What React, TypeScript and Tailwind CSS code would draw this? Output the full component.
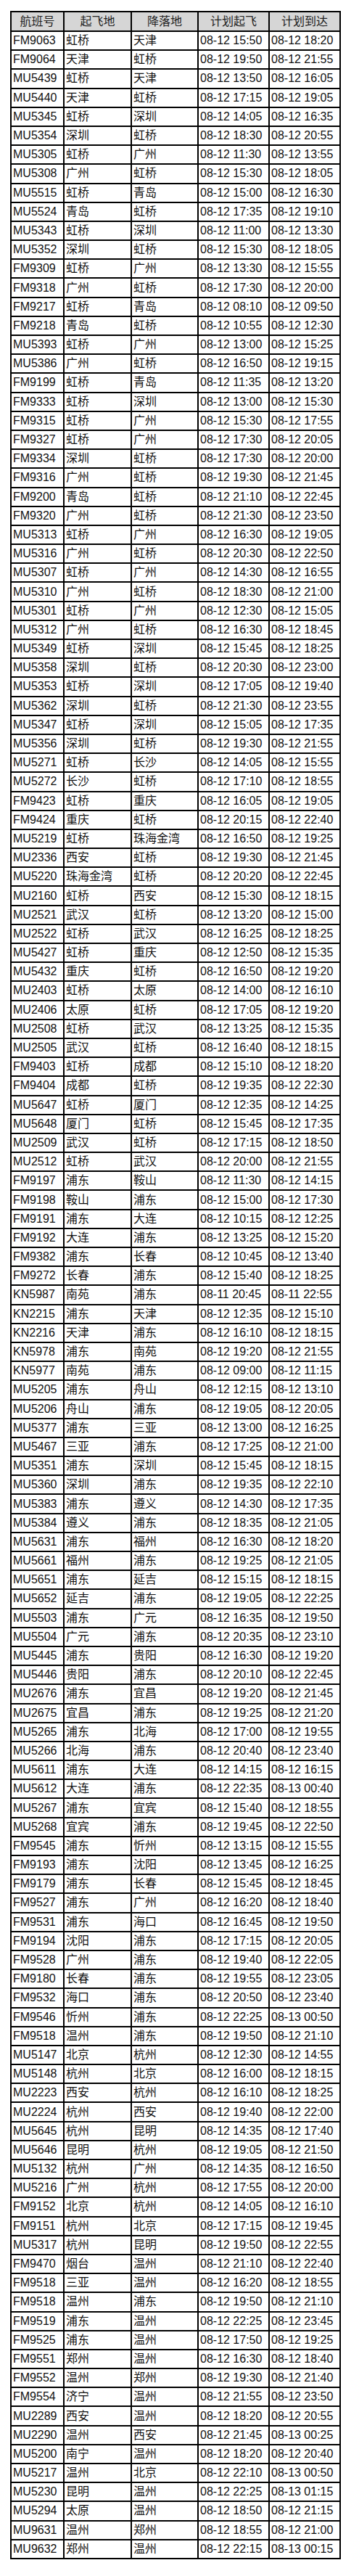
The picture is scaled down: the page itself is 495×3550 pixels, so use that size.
const raw = `FM9063|虹桥|天津|08-12 15:50|08-12 18:20
FM9064|天津|虹桥|08-12 19:50|08-12 21:55
MU5439|虹桥|天津|08-12 13:50|08-12 16:05
MU5440|天津|虹桥|08-12 17:15|08-12 19:05
MU5345|虹桥|深圳|08-12 14:05|08-12 16:35
MU5354|深圳|虹桥|08-12 18:30|08-12 20:55
MU5305|虹桥|广州|08-12 11:30|08-12 13:55
MU5308|广州|虹桥|08-12 15:30|08-12 18:05
MU5515|虹桥|青岛|08-12 15:00|08-12 16:30
MU5524|青岛|虹桥|08-12 17:35|08-12 19:10
MU5343|虹桥|深圳|08-12 11:00|08-12 13:30
MU5352|深圳|虹桥|08-12 15:30|08-12 18:05
FM9309|虹桥|广州|08-12 13:30|08-12 15:55
FM9318|广州|虹桥|08-12 17:30|08-12 20:00
FM9217|虹桥|青岛|08-12 08:10|08-12 09:50
FM9218|青岛|虹桥|08-12 10:55|08-12 12:30
MU5393|虹桥|广州|08-12 13:00|08-12 15:25
MU5386|广州|虹桥|08-12 16:50|08-12 19:15
FM9199|虹桥|青岛|08-12 11:35|08-12 13:20
FM9333|虹桥|深圳|08-12 13:00|08-12 15:30
FM9315|虹桥|广州|08-12 15:30|08-12 17:55
FM9327|虹桥|广州|08-12 17:30|08-12 20:05
FM9334|深圳|虹桥|08-12 17:30|08-12 20:00
FM9316|广州|虹桥|08-12 19:30|08-12 21:45
FM9200|青岛|虹桥|08-12 21:10|08-12 22:45
FM9320|广州|虹桥|08-12 21:30|08-12 23:50
MU5313|虹桥|广州|08-12 16:30|08-12 19:05
MU5316|广州|虹桥|08-12 20:30|08-12 22:50
MU5307|虹桥|广州|08-12 14:30|08-12 16:55
MU5310|广州|虹桥|08-12 18:30|08-12 21:00
MU5301|虹桥|广州|08-12 12:30|08-12 15:05
MU5312|广州|虹桥|08-12 16:30|08-12 18:45
MU5349|虹桥|深圳|08-12 15:45|08-12 18:25
MU5358|深圳|虹桥|08-12 20:30|08-12 23:00
MU5353|虹桥|深圳|08-12 17:05|08-12 19:40
MU5362|深圳|虹桥|08-12 21:30|08-12 23:55
MU5347|虹桥|深圳|08-12 15:05|08-12 17:35
MU5356|深圳|虹桥|08-12 19:30|08-12 21:55
MU5271|虹桥|长沙|08-12 14:05|08-12 15:55
MU5272|长沙|虹桥|08-12 17:10|08-12 18:55
FM9423|虹桥|重庆|08-12 16:05|08-12 19:05
FM9424|重庆|虹桥|08-12 20:15|08-12 22:40
MU5219|虹桥|珠海金湾|08-12 16:50|08-12 19:25
MU2336|西安|虹桥|08-12 19:30|08-12 21:45
MU5220|珠海金湾|虹桥|08-12 20:20|08-12 22:45
MU2160|虹桥|西安|08-12 15:30|08-12 18:15
MU2521|武汉|虹桥|08-12 13:20|08-12 15:00
MU2522|虹桥|武汉|08-12 16:25|08-12 18:25
MU5427|虹桥|重庆|08-12 12:50|08-12 15:35
MU5432|重庆|虹桥|08-12 16:50|08-12 19:20
MU2403|虹桥|太原|08-12 14:00|08-12 16:10
MU2406|太原|虹桥|08-12 17:05|08-12 19:20
MU2508|虹桥|武汉|08-12 13:25|08-12 15:35
MU2505|武汉|虹桥|08-12 16:40|08-12 18:15
FM9403|虹桥|成都|08-12 15:10|08-12 18:20
FM9404|成都|虹桥|08-12 19:35|08-12 22:30
MU5647|虹桥|厦门|08-12 12:35|08-12 14:25
MU5648|厦门|虹桥|08-12 15:45|08-12 17:35
MU2509|武汉|虹桥|08-12 17:15|08-12 18:50
MU2512|虹桥|武汉|08-12 20:00|08-12 21:55
FM9197|浦东|鞍山|08-12 11:30|08-12 14:15
FM9198|鞍山|浦东|08-12 15:00|08-12 17:30
FM9191|浦东|大连|08-12 10:15|08-12 12:25
FM9192|大连|浦东|08-12 13:25|08-12 15:20
FM9382|浦东|长春|08-12 10:45|08-12 13:40
FM9272|长春|浦东|08-12 15:40|08-12 18:25
KN5987|南苑|浦东|08-11 20:45|08-11 22:55
KN2215|浦东|天津|08-12 12:35|08-12 15:10
KN2216|天津|浦东|08-12 16:10|08-12 18:15
KN5978|浦东|南苑|08-12 19:20|08-12 21:55
KN5977|南苑|浦东|08-12 09:00|08-12 11:15
MU5205|浦东|舟山|08-12 12:15|08-12 13:10
MU5206|舟山|浦东|08-12 19:05|08-12 20:05
MU5377|浦东|三亚|08-12 13:00|08-12 16:25
MU5467|三亚|浦东|08-12 17:25|08-12 21:00
MU5351|浦东|深圳|08-12 15:45|08-12 18:15
MU5360|深圳|浦东|08-12 19:35|08-12 22:10
MU5383|浦东|遵义|08-12 14:30|08-12 17:35
MU5384|遵义|浦东|08-12 18:35|08-12 21:05
MU5631|浦东|福州|08-12 16:30|08-12 18:20
MU5661|福州|浦东|08-12 19:25|08-12 21:05
MU5651|浦东|延吉|08-12 15:15|08-12 18:15
MU5652|延吉|浦东|08-12 19:05|08-12 22:25
MU5503|浦东|广元|08-12 16:35|08-12 19:50
MU5504|广元|浦东|08-12 20:35|08-12 23:10
MU5445|浦东|贵阳|08-12 16:30|08-12 19:20
MU5446|贵阳|浦东|08-12 20:10|08-12 22:45
MU2676|浦东|宜昌|08-12 19:20|08-12 21:45
MU2675|宜昌|浦东|08-12 19:25|08-12 21:20
MU5265|浦东|北海|08-12 17:00|08-12 19:55
MU5266|北海|浦东|08-12 20:40|08-12 23:40
MU5611|浦东|大连|08-12 14:15|08-12 16:15
MU5612|大连|浦东|08-12 22:35|08-13 00:40
MU5267|浦东|宜宾|08-12 15:40|08-12 18:55
MU5268|宜宾|浦东|08-12 19:45|08-12 22:50
FM9545|浦东|忻州|08-12 13:15|08-12 15:55
FM9193|浦东|沈阳|08-12 13:45|08-12 16:25
FM9179|浦东|长春|08-12 15:45|08-12 18:45
FM9527|浦东|广州|08-12 16:20|08-12 18:40
FM9531|浦东|海口|08-12 16:45|08-12 19:50
FM9194|沈阳|浦东|08-12 17:15|08-12 20:05
FM9528|广州|浦东|08-12 19:40|08-12 22:05
FM9180|长春|浦东|08-12 19:55|08-12 23:05
FM9532|海口|浦东|08-12 20:50|08-12 23:40
FM9546|忻州|浦东|08-12 22:25|08-13 00:50
FM9518|温州|浦东|08-12 19:50|08-12 21:10
MU5147|北京|杭州|08-12 12:30|08-12 14:55
MU5148|杭州|北京|08-12 16:00|08-12 18:15
MU2223|西安|杭州|08-12 16:10|08-12 18:25
MU2224|杭州|西安|08-12 19:40|08-12 22:00
MU5645|杭州|昆明|08-12 14:35|08-12 17:40
MU5646|昆明|杭州|08-12 19:05|08-12 21:50
MU5132|杭州|广州|08-12 14:35|08-12 16:50
MU5216|广州|杭州|08-12 17:55|08-12 20:00
FM9152|北京|杭州|08-12 14:05|08-12 16:10
FM9151|杭州|北京|08-12 17:15|08-12 19:45
MU5317|杭州|昆明|08-12 19:50|08-12 22:55
FM9470|烟台|温州|08-12 21:10|08-12 22:40
FM9518|三亚|温州|08-12 16:20|08-12 18:55
FM9518|温州|浦东|08-12 19:50|08-12 21:10
FM9519|浦东|温州|08-12 22:25|08-12 23:45
FM9525|浦东|温州|08-12 17:50|08-12 19:25
FM9551|郑州|温州|08-12 16:30|08-12 18:40
FM9552|温州|郑州|08-12 19:30|08-12 21:40
FM9554|济宁|温州|08-12 21:55|08-12 23:50
MU2289|西安|温州|08-12 18:20|08-12 20:55
MU2290|温州|西安|08-12 21:45|08-13 00:25
MU5200|南宁|温州|08-12 18:20|08-12 20:40
MU5217|温州|北京|08-12 22:10|08-13 00:50
MU5230|昆明|温州|08-12 22:25|08-13 01:15
MU5294|太原|温州|08-12 18:50|08-12 21:15
MU9631|温州|郑州|08-12 18:55|08-12 21:00
MU9632|郑州|温州|08-12 22:15|08-13 00:15`;

const flights = raw.split('\n').map((line) => line.split('|'));

const headers = ['航班号', '起飞地', '降落地', '计划起飞', '计划到达'];

export default function App() {
  return (
    <div
      className="w-[495px] min-h-[3550px] bg-white pt-[15px] pl-[14px] text-[#111]"
      style={{ fontFamily: '"Liberation Sans", "Noto Sans CJK SC", sans-serif' }}
    >
      <table className="border-collapse border-2 border-black text-[16px] leading-none">
        <colgroup>
          <col className="w-[73px]" />
          <col className="w-[93px]" />
          <col className="w-[92px]" />
          <col className="w-[98px]" />
          <col className="w-[98px]" />
        </colgroup>
        <thead>
          <tr className="h-[27px] bg-[#d6d6d6]">
            {headers.map((h) => (
              <th key={h} className="border-2 border-black font-normal text-center text-[#222] p-0">
                {h}
              </th>
            ))}
          </tr>
        </thead>
        <tbody>
          {flights.map((row, i) => (
            <tr key={i} className="h-[26.2px]">
              {row.map((cell, j) => (
                <td key={j} className="border-2 border-black px-[2px] py-0 whitespace-nowrap">
                  {cell}
                </td>
              ))}
            </tr>
          ))}
        </tbody>
      </table>
    </div>
  );
}
